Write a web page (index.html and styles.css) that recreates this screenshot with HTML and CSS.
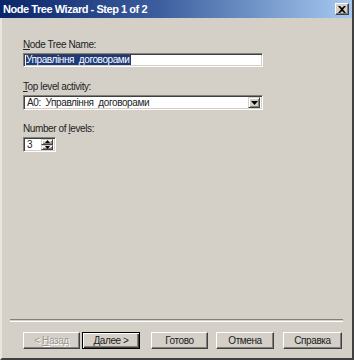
FILE: index.html
```html
<!DOCTYPE html>
<html>
<head>
<meta charset="utf-8">
<link rel="stylesheet" href="styles.css">
</head>
<body>
<div class="window">
  <div class="titlebar">
    <span class="title">Node Tree Wizard - Step 1 of 2</span>
    <span class="close">
      <svg width="8" height="7" viewBox="0 0 8 7"><path d="M0 0h2l2 2 2-2h2L5 3.5 8 7H6L4 5 2 7H0l3-3.5z" fill="#000"/></svg>
    </span>
  </div>
  <div class="content">
    <div class="label"><u>N</u>ode Tree Name:</div>
    <div class="input"><span class="sel">Управління&nbsp; договорами</span></div>
    <div class="label gap"><u>T</u>op level activity:</div>
    <div class="combo">
      <span class="combo-text">A0:&nbsp; Управління&nbsp; договорами</span>
      <span class="dropbtn"><svg width="7" height="4" viewBox="0 0 7 4"><path d="M0 0h7L3.5 4z" fill="#000"/></svg></span>
    </div>
    <div class="label gap2">Number of <u>l</u>evels:</div>
    <div class="spin">
      <span class="spin-text">3</span>
      <span class="spin-btns">
        <span class="sbtn"><svg width="5" height="3" viewBox="0 0 5 3"><path d="M0 3h5L2.5 0z" fill="#000"/></svg></span>
        <span class="sbtn"><svg width="5" height="3" viewBox="0 0 5 3"><path d="M0 0h5L2.5 3z" fill="#000"/></svg></span>
      </span>
    </div>
  </div>
  <div class="separator"></div>
  <div class="buttons">
    <span class="btn disabled w57">&lt;&nbsp;<u>Н</u>азад</span>
    <span class="btn default w58"><u>Д</u>алее &gt;</span>
    <span class="btn w57 ml11">Готово</span>
    <span class="btn w58 ml8">Отмена</span>
    <span class="btn w59 ml9">Справка</span>
  </div>
</div>
</body>
</html>
```
FILE: styles.css
```css
html, body {
  margin: 0;
  padding: 0;
  background: #d4d0c8;
}
.window {
  width: 354px;
  height: 360px;
  box-sizing: border-box;
  display: flex;
  flex-direction: column;
  background: #d4d0c8;
  border-left: 2px solid #e8e6e0;
  border-right: 2px solid #404040;
  border-bottom: 2px solid #404040;
  font-family: "Liberation Sans", Arial, sans-serif;
  font-size: 10px;
  letter-spacing: -0.4px;
  color: #222;
}
.titlebar {
  height: 18px;
  flex: none;
  display: flex;
  align-items: center;
  justify-content: space-between;
  margin-left: -2px;
  padding-left: 3px;
  padding-right: 3px;
  background: linear-gradient(to right, #0a246a, #3c5e9e 45%, #a6caf0);
}
.title {
  color: #fff;
  font-weight: bold;
  font-size: 11px;
  letter-spacing: -0.45px;
}
.close {
  width: 14px;
  height: 12px;
  box-sizing: border-box;
  background: #d4d0c8;
  border-top: 1px solid #fff;
  border-left: 1px solid #fff;
  border-right: 1px solid #404040;
  border-bottom: 1px solid #404040;
  box-shadow: inset -1px -1px 0 #808080;
  display: flex;
  align-items: center;
  justify-content: center;
}
.close svg { display: block; }
.content {
  flex: 1;
  padding-top: 20px;
  padding-left: 21px;
  display: flex;
  flex-direction: column;
  align-items: flex-start;
}
.label {
  line-height: 13px;
  height: 13px;
  margin-bottom: 2px;
}
.label.gap { margin-top: 13px; }
.label.gap2 { margin-top: 12px; }
.input, .combo, .spin {
  box-sizing: border-box;
  background: #fff;
  border-top: 1px solid #808080;
  border-left: 1px solid #808080;
  border-right: 1px solid #fff;
  border-bottom: 1px solid #fff;
  box-shadow: inset 1px 1px 0 #404040, inset -1px -1px 0 #d4d0c8;
  display: flex;
  align-items: center;
}
.input {
  width: 240px;
  height: 14px;
  padding-left: 2px;
}
.sel {
  background: #1c3a7c;
  color: #fff;
  line-height: 10px;
  height: 10px;
  padding-right: 1px;
}
.combo {
  width: 240px;
  height: 15px;
  justify-content: space-between;
  padding: 2px;
}
.combo-text {
  padding-left: 1px;
  line-height: 11px;
}
.dropbtn, .sbtn {
  box-sizing: border-box;
  background: #d4d0c8;
  border-top: 1px solid #d4d0c8;
  border-left: 1px solid #d4d0c8;
  border-right: 1px solid #404040;
  border-bottom: 1px solid #404040;
  box-shadow: inset 1px 1px 0 #fff, inset -1px -1px 0 #808080;
  display: flex;
  align-items: center;
  justify-content: center;
}
.dropbtn {
  width: 12px;
  height: 11px;
}
.dropbtn svg, .sbtn svg { display: block; }
.spin {
  width: 33px;
  height: 15px;
  justify-content: space-between;
  padding: 2px;
}
.spin-text {
  padding-left: 1px;
  line-height: 11px;
}
.spin-btns {
  display: flex;
  flex-direction: column;
  width: 12px;
  height: 11px;
}
.sbtn {
  flex: 1;
}
.separator {
  flex: none;
  margin-left: 8px;
  width: 333px;
  height: 1px;
  border-top: 1px solid #808080;
  border-bottom: 1px solid #fff;
}
.buttons {
  flex: none;
  display: flex;
  padding-left: 21px;
  margin-top: 10px;
  margin-bottom: 9px;
}
.btn {
  box-sizing: border-box;
  height: 17px;
  background: #d4d0c8;
  border-top: 1px solid #fff;
  border-left: 1px solid #fff;
  border-right: 1px solid #404040;
  border-bottom: 1px solid #404040;
  box-shadow: inset -1px -1px 0 #808080;
  display: flex;
  align-items: center;
  justify-content: center;
}
.btn.default {
  border: 1px solid #000;
  box-shadow: inset 1px 1px 0 #fff, inset -1px -1px 0 #404040, inset -2px -2px 0 #808080;
  margin-left: 2px;
}
.btn.disabled {
  color: #9a9890;
  text-shadow: 1px 1px 0 #fff;
}
.w57 { width: 57px; }
.w58 { width: 58px; }
.w59 { width: 59px; }
.ml11 { margin-left: 11px; }
.ml8 { margin-left: 8px; }
.ml9 { margin-left: 9px; }
```
